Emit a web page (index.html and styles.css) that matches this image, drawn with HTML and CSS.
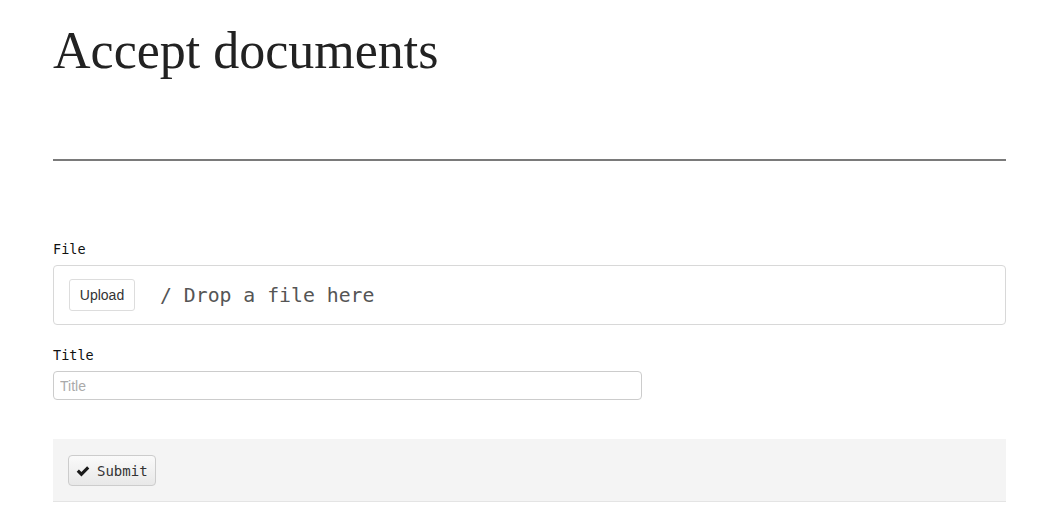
FILE: index.html
```html
<!DOCTYPE html>
<html lang="en">
<head>
    <meta charset="UTF-8">
    <meta name="viewport" content="width=device-width, initial-scale=1.0">
    <title>Accept documents</title>
    <link rel="stylesheet" href="styles.css">
</head>
<body>
    <div class="page">
        <h1 class="page-title">Accept documents</h1>
        <hr class="divider">
        <form class="doc-form" onsubmit="return false">
            <div class="field">
                <label class="field-label">File</label>
                <div class="dropzone">
                    <button type="button" class="upload-btn">Upload</button>
                    <span class="drop-text">/ Drop a file here</span>
                </div>
            </div>
            <div class="field">
                <label class="field-label" for="title">Title</label>
                <input id="title" class="text-input" type="text" placeholder="Title">
            </div>
            <div class="form-actions">
                <button type="submit" class="submit-btn">
                    <svg class="check" viewBox="0 0 16 16" width="14" height="14">
                        <path d="M0.8 8.8 L3.3 6.3 L6.2 9.2 L12.7 2.7 L15.2 5.2 L6.2 14.2 Z" fill="#1a1a1a"/>
                    </svg>
                    Submit
                </button>
            </div>
        </form>
    </div>
</body>
</html>
```

FILE: styles.css
```css
body {
    margin: 0;
    background: #fff;
    color: #222;
    font-family: "DejaVu Sans Mono", monospace;
}
.page {
    padding: 0 54px 0 53px;
}
.page-title {
    font-family: "Liberation Serif", serif;
    font-weight: normal;
    font-size: 52px;
    line-height: 1;
    margin: 0;
    padding-top: 25px;
    color: #222;
}
.divider {
    border: none;
    border-top: 2px solid #7a7a7a;
    margin: 82px 0 0;
}
.doc-form {
    padding-top: 80px;
}
.field {
    margin-bottom: 22px;
}
.field-label {
    display: block;
    font-size: 13.5px;
    line-height: 16px;
    margin-bottom: 8px;
    color: #111;
}
.dropzone {
    display: flex;
    align-items: center;
    height: 58px;
    border: 1px solid #d8d8d8;
    border-radius: 4px;
    padding: 0 15px;
}
.upload-btn {
    font-family: "Liberation Sans", Arial, sans-serif;
    font-size: 14px;
    color: #333;
    background: #fff;
    border: 1px solid #ddd;
    border-radius: 3px;
    height: 32px;
    width: 66px;
    padding: 0;
}
.drop-text {
    margin-left: 25px;
    font-size: 19.8px;
    color: #555;
}
.text-input {
    display: block;
    box-sizing: border-box;
    width: 589px;
    height: 29px;
    border: 1px solid #ccc;
    border-radius: 4px;
    padding: 0 6px;
    font-family: "Liberation Sans", Arial, sans-serif;
    font-size: 14px;
}
.text-input::placeholder {
    color: #aaa;
}
.form-actions {
    margin-top: 39px;
    background: #f4f4f4;
    border-bottom: 1px solid #e4e4e4;
    padding: 16px 15px 15px;
}
.submit-btn {
    display: flex;
    align-items: center;
    gap: 7px;
    height: 31px;
    padding: 0 7px 0 7px;
    font-family: "DejaVu Sans Mono", monospace;
    font-size: 14px;
    color: #333;
    background: linear-gradient(#fafafa, #e8e8e8);
    border: 1px solid #ccc;
    border-radius: 4px;
}
```
